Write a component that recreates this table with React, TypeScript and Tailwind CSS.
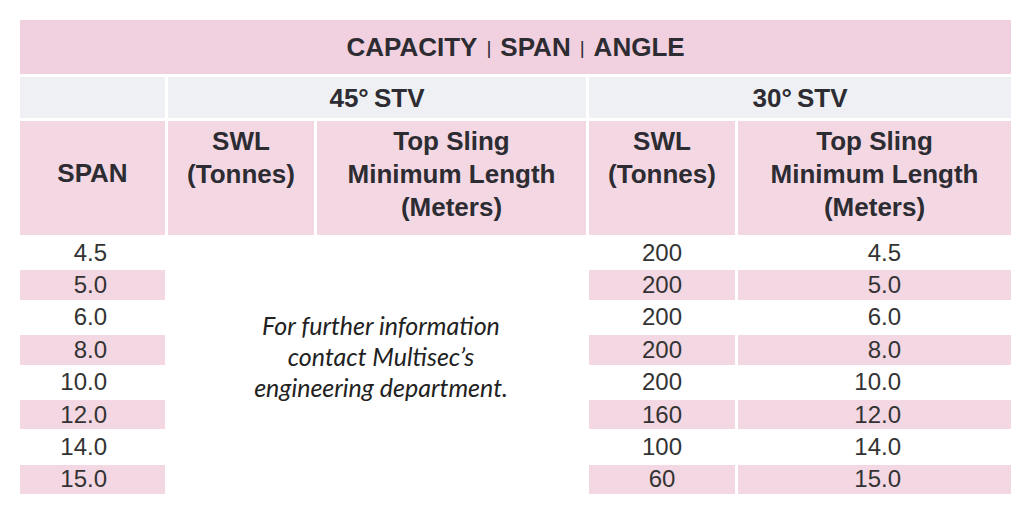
import React from 'react'

const rows = [
  { span: '4.5', swl: '200', len: '4.5' },
  { span: '5.0', swl: '200', len: '5.0' },
  { span: '6.0', swl: '200', len: '6.0' },
  { span: '8.0', swl: '200', len: '8.0' },
  { span: '10.0', swl: '200', len: '10.0' },
  { span: '12.0', swl: '160', len: '12.0' },
  { span: '14.0', swl: '100', len: '14.0' },
  { span: '15.0', swl: '60', len: '15.0' },
]

export default function App() {
  return (
    <div className="w-[1024px] h-[516px] bg-white overflow-hidden pt-[17px] pl-[17px] font-['Liberation_Sans',Arial,sans-serif] text-[#333]">
      <table className="table-fixed border-separate border-spacing-[3px] w-[997px]">
        <colgroup>
          <col className="w-[145px]" />
          <col className="w-[146px]" />
          <col className="w-[269px]" />
          <col className="w-[146px]" />
          <col className="w-[273px]" />
        </colgroup>
        <thead className="text-[#2c2c32]">
          <tr>
            <th
              colSpan={5}
              className="h-[54px] bg-[#f1d1df] text-[26px] font-bold leading-none text-center align-middle"
            >
              CAPACITY<span className="font-normal text-[19px] mx-[9px] relative -top-[2px]">|</span>SPAN
              <span className="font-normal text-[19px] mx-[9px] relative -top-[2px]">|</span>ANGLE
            </th>
          </tr>
          <tr>
            <th className="h-[41px] bg-[#eef0f3]" />
            <th colSpan={2} className="bg-[#eef0f3] text-[26px] font-bold leading-none">
              45°&#8201;STV
            </th>
            <th colSpan={2} className="bg-[#eef0f3] text-[26px] font-bold leading-none">
              30°&#8201;STV
            </th>
          </tr>
          <tr className="text-[26px] font-bold leading-[33px]">
            <th className="h-[114px] bg-[#f3d8e3] align-top pt-[36px]">SPAN</th>
            <th className="bg-[#f3d8e3] align-top pt-[4px]">
              SWL
              <br />
              (Tonnes)
            </th>
            <th className="bg-[#f3d8e3] align-top pt-[4px]">
              Top Sling
              <br />
              Minimum Length
              <br />
              (Meters)
            </th>
            <th className="bg-[#f3d8e3] align-top pt-[4px]">
              SWL
              <br />
              (Tonnes)
            </th>
            <th className="bg-[#f3d8e3] align-top pt-[4px]">
              Top Sling
              <br />
              Minimum Length
              <br />
              (Meters)
            </th>
          </tr>
        </thead>
        <tbody className="text-[24px] leading-none">
          {rows.map((r, i) => {
            const bg = i % 2 === 1 ? 'bg-[#f3d8e3]' : 'bg-white'
            return (
              <tr key={r.span}>
                <td className={`${bg} h-[29.4px] text-right pr-[58px] p-0`}>{r.span}</td>
                {i === 0 && (
                  <td
                    rowSpan={8}
                    colSpan={2}
                    className="bg-white text-center align-middle pb-[20px] pl-[8px] font-['Lato','Open_Sans',sans-serif] italic text-[25px] leading-[31px] text-[#222]"
                  >
                    For further information
                    <br />
                    contact Multisec’s
                    <br />
                    engineering department.
                  </td>
                )}
                <td className={`${bg} text-center`}>{r.swl}</td>
                <td className={`${bg} text-right pr-[110px]`}>{r.len}</td>
              </tr>
            )
          })}
        </tbody>
      </table>
    </div>
  )
}
